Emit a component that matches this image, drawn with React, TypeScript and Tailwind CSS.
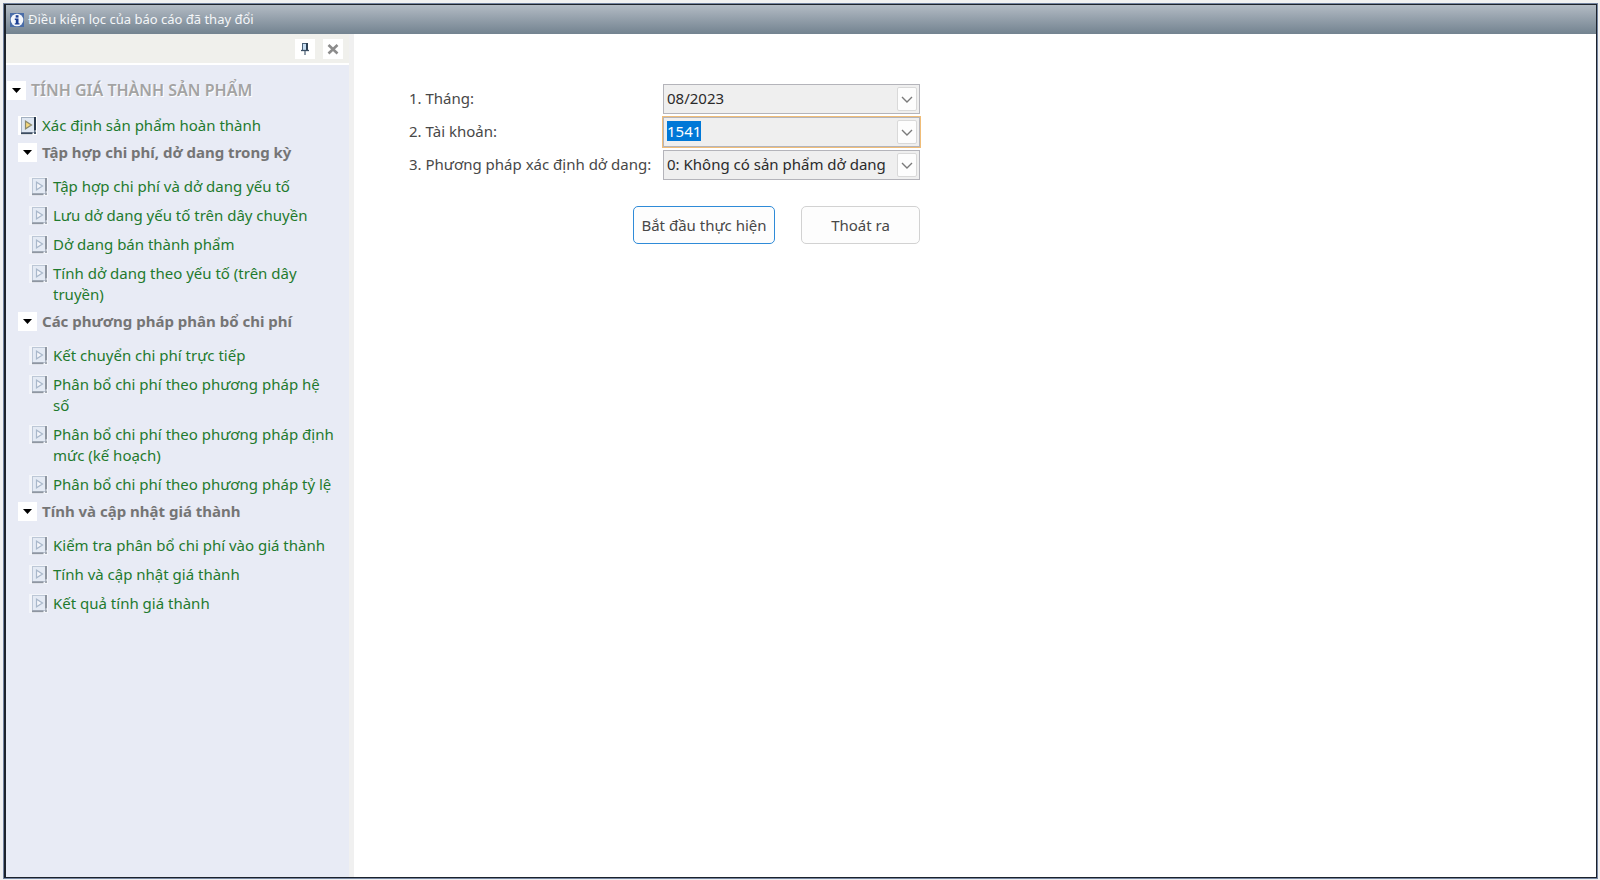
import { useEffect, useRef } from "react";

type TreeItem = {
    label: string;
};

type TreeGroup = {
    title: string;
    items: TreeItem[];
};

const GROUPS: TreeGroup[] = [
    {
        title: "Tập hợp chi phí, dở dang trong kỳ",
        items: [
            { label: "Tập hợp chi phí và dở dang yếu tố" },
            { label: "Lưu dở dang yếu tố trên dây chuyền" },
            { label: "Dở dang bán thành phẩm" },
            { label: "Tính dở dang theo yếu tố (trên dây truyền)" },
        ],
    },
    {
        title: "Các phương pháp phân bổ chi phí",
        items: [
            { label: "Kết chuyển chi phí trực tiếp" },
            { label: "Phân bổ chi phí theo phương pháp hệ số" },
            { label: "Phân bổ chi phí theo phương pháp định mức (kế hoạch)" },
            { label: "Phân bổ chi phí theo phương pháp tỷ lệ" },
        ],
    },
    {
        title: "Tính và cập nhật giá thành",
        items: [
            { label: "Kiểm tra phân bổ chi phí vào giá thành" },
            { label: "Tính và cập nhật giá thành" },
            { label: "Kết quả tính giá thành" },
        ],
    },
];

function InfoIcon() {
    return (
        <svg viewBox="0 0 14 14" className="size-3.5 shrink-0" aria-hidden="true">
            <rect width="14" height="14" fill="#4a6da8" />
            <circle cx="7" cy="7" r="6.3" fill="#f4f7fc" />
            <rect x="5.7" y="2.2" width="2.8" height="2.4" fill="#1c3f94" />
            <path d="M4.8 5.6h3.7v4.6h1v1.4H4.8v-1.4h1V7h-1z" fill="#1c3f94" />
        </svg>
    );
}

function PinIcon() {
    return (
        <svg viewBox="0 0 10 14" className="h-3.5 w-2.5" aria-hidden="true">
            <rect x="2.5" y="1.5" width="4" height="7" fill="#c5dcf0" stroke="#4a6178" />
            <path d="M6 1h2v8H6z" fill="#2c4054" />
            <path d="M1 8.5h8" stroke="#3c5066" strokeWidth="1.3" />
            <path d="M5 9v4" stroke="#4b5f73" strokeWidth="1.2" />
        </svg>
    );
}

function CloseIcon() {
    return (
        <svg viewBox="0 0 12 12" className="size-3" aria-hidden="true">
            <path d="M1.5 2l9 8.5M10.5 2l-9 8.5" stroke="#8c8c8c" strokeWidth="2.6" />
        </svg>
    );
}

function RunIcon({ active = false }: { active?: boolean }) {
    return (
        <svg viewBox="0 0 19 19" className="mt-px size-[19px] shrink-0" aria-hidden="true">
            <rect width="19" height="19" fill={active ? "#ffffff" : "#f3f5fa"} />
            <rect x="3.5" y="1.5" width="13" height="15" fill={active ? "#dfe7f2" : "#e4eaf4"} stroke={active ? "#a3b0c0" : "#bcc7d6"} />
            <path d="M3 17.3h11.5" stroke={active ? "#3c4c60" : "#8f96a1"} strokeWidth="1.8" />
            <path d="M17 1v13.5" stroke={active ? "#2c3b4e" : "#8f96a1"} strokeWidth="2" />
            <path d="M16 15.5h2v2.6h-2z" fill={active ? "#4d5d70" : "#a3a9b3"} />
            <path
                d="M7.5 5.2v7.6l6-3.8z"
                fill={active ? "#f6d77a" : "#f4f6fa"}
                stroke={active ? "#8c8a6c" : "#a9b8cb"}
                strokeWidth="1.2"
            />
        </svg>
    );
}

function Toggle({ label }: { label: string }) {
    return (
        <button type="button" aria-label={label} className="flex size-[19px] shrink-0 items-center justify-center bg-white">
            <svg viewBox="0 0 9 5" className="h-[5px] w-[9px]" aria-hidden="true">
                <path d="M0 0h9L4.5 5z" fill="#000000" />
            </svg>
        </button>
    );
}

function TreeLink({ label, active }: TreeItem & { active?: boolean }) {
    return (
        <li className="flex items-start gap-[5px] text-[#1f7a2e]">
            <RunIcon active={active} />
            <a href="#" className="hover:underline">
                {label}
            </a>
        </li>
    );
}

function Sidebar() {
    return (
        <aside className="flex w-[348px] shrink-0 flex-col border-r-[5px] border-[#f0f0f0] bg-[#e8ebf5]">
            <div className="flex h-[31px] items-center justify-end gap-2 border-b-2 border-white bg-[#f0f0ec] pr-1.5">
                <button type="button" aria-label="Ghim" className="flex size-5 items-center justify-center bg-white">
                    <PinIcon />
                </button>
                <button type="button" aria-label="Đóng" className="flex size-5 items-center justify-center bg-white">
                    <CloseIcon />
                </button>
            </div>

            <nav className="pt-[15px] pr-3 pl-px text-[15px] leading-[21px]">
                <h1 className="flex items-center gap-[5px] text-base leading-[21px] font-semibold text-[#a3a3a3] text-shadow-[1px_1px_0_#ffffff]">
                    <Toggle label="Tính giá thành sản phẩm" />
                    TÍNH GIÁ THÀNH SẢN PHẨM
                </h1>
                <div className="pt-3.5 pl-[11px]">
                    <ul>
                        <TreeLink label="Xác định sản phẩm hoàn thành" active />
                    </ul>
                    {GROUPS.map((group) => (
                        <section key={group.title} className="pt-1.5">
                            <h2 className="flex items-center gap-[5px] font-bold text-[#757575]">
                                <Toggle label={group.title} />
                                {group.title}
                            </h2>
                            <ul className="flex flex-col gap-2 pt-[13px] pl-[11px]">
                                {group.items.map((item) => (
                                    <TreeLink key={item.label} label={item.label} />
                                ))}
                            </ul>
                        </section>
                    ))}
                </div>
            </nav>
        </aside>
    );
}

function DropButton() {
    return (
        <span className="pointer-events-none absolute inset-y-0.5 right-0.5 flex w-5 items-center justify-center rounded-xs border border-[#d9d9d9] bg-[#fdfdfd]">
            <svg viewBox="0 0 12 7" className="h-[7px] w-3" aria-hidden="true">
                <path d="M1 1l5 5 5-5" fill="none" stroke="#7a7a7a" strokeWidth="1.4" />
            </svg>
        </span>
    );
}

function SelectField({ id, label, value }: { id: string; label: string; value: string }) {
    return (
        <>
            <label htmlFor={id} className="pb-0.5">
                {label}
            </label>
            <div className="relative h-[30px] border border-[#b4b4ba] bg-[#efefef]">
                <select id={id} defaultValue={value} className="size-full appearance-none pb-0.5 pl-[3px] text-[#2b2b2b] outline-none">
                    <option>{value}</option>
                </select>
                <DropButton />
            </div>
        </>
    );
}

function FilterForm() {
    const accountRef = useRef<HTMLInputElement | null>(null);

    // the account box opens focused, with its value ready to be typed over
    useEffect(() => {
        accountRef.current?.focus();
        accountRef.current?.select();
    }, []);

    return (
        <form className="w-[511px] text-[15px] leading-[21px] text-[#484848]" onSubmit={(e) => e.preventDefault()}>
            <div className="grid grid-cols-[1fr_257px] items-center gap-y-[3px]">
                <SelectField id="month" label="1. Tháng:" value="08/2023" />

                <label htmlFor="account" className="pb-0.5">
                    2. Tài khoản:
                </label>
                <div className="relative h-[30px] border border-[#b4b4ba] bg-[#efefef] ring-1 ring-[#f0bd78]">
                    <input
                        id="account"
                        ref={accountRef}
                        defaultValue="1541"
                        className="size-full pb-0.5 pl-[3px] text-[#2b2b2b] outline-none selection:bg-[#0078d7] selection:text-white"
                    />
                    <DropButton />
                </div>

                <SelectField id="method" label="3. Phương pháp xác định dở dang:" value="0: Không có sản phẩm dở dang" />
            </div>

            <div className="flex justify-end gap-[26px] pt-[26px]">
                <button type="submit" className="h-[38px] w-[142px] rounded-[5px] border border-[#2f8bd8] bg-[#fdfdfd] whitespace-nowrap">
                    Bắt đầu thực hiện
                </button>
                <button type="button" className="h-[38px] w-[119px] rounded-[5px] border border-[#d2d2d2] bg-[#fdfdfd]">
                    Thoát ra
                </button>
            </div>
        </form>
    );
}

export default function App() {
    return (
        <div className="flex min-h-screen bg-[#f0f0f0] pt-[3px] pr-0.5 pb-px pl-[3px] font-['Noto_Sans','Open_Sans',sans-serif]">
            <div className="flex flex-1 border border-[#7484a0]">
                <div className="flex flex-1 flex-col border border-l-2 border-[#1c222b] bg-white">
                    <header className="flex h-[29px] items-center gap-1 bg-linear-to-b from-[#b3bbc4] to-[#738390] pl-1 text-[13px] text-[#f4f6f8]">
                        <InfoIcon />
                        Điều kiện lọc của báo cáo đã thay đổi
                    </header>
                    <div className="flex flex-1">
                        <Sidebar />
                        <main className="flex-1 pt-[50px] pl-[55px]">
                            <FilterForm />
                        </main>
                    </div>
                </div>
            </div>
        </div>
    );
}
